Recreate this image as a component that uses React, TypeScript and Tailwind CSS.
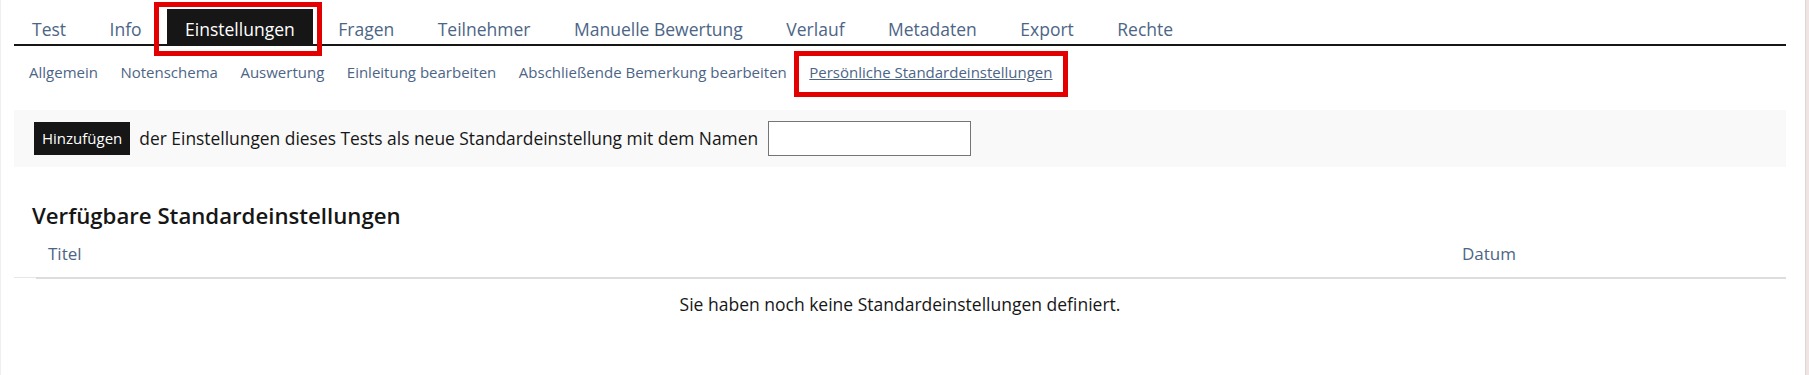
import React from 'react';

const TABS = ['Test', 'Info', 'Einstellungen', 'Fragen', 'Teilnehmer', 'Manuelle Bewertung', 'Verlauf', 'Metadaten', 'Export', 'Rechte'];
const SUBTABS = ['Allgemein', 'Notenschema', 'Auswertung', 'Einleitung bearbeiten', 'Abschließende Bemerkung bearbeiten', 'Persönliche Standardeinstellungen'];

/* red annotation frame drawn over the highlighted element */
function Marker({ className }: { className: string }) {
  return <span className={`pointer-events-none absolute z-10 border-[5px] border-[#e20000] ${className}`} />;
}

export default function App() {
  return (
    <div className="flex h-[375px] w-full overflow-hidden bg-white font-['Open_Sans',sans-serif] text-[#161616]">
      <div className="flex-1 border-l border-[#efefef] pl-[13px] pr-[19px] pt-[9px]">

        {/* ── Main tabs ── */}
        <div className="flex gap-[7.5px] border-b-2 border-[#161616]">
          {TABS.map((t) => {
            const active = t === 'Einstellungen';
            return (
              <div
                key={t}
                className={`relative px-[18px] pt-[10px] pb-[4px] text-[17.5px] leading-[21px] ${
                  active ? 'bg-[#161616] text-white' : 'text-[#4c6586]'
                }`}
              >
                {t}
                {active && <Marker className="-left-[13px] -right-[9px] -top-[7px] -bottom-[12px]" />}
              </div>
            );
          })}
        </div>

        {/* ── Sub tabs ── */}
        <div className="flex gap-[22.5px] pl-[15px] pt-[16px] text-[15px] leading-[20px] text-[#4c6586]">
          {SUBTABS.map((s) => {
            const active = s === 'Persönliche Standardeinstellungen';
            return (
              <span key={s} className={`relative ${active ? 'underline' : ''}`}>
                {s}
                {active && <Marker className="-left-[15px] -right-[15px] -top-[11px] -bottom-[15px]" />}
              </span>
            );
          })}
        </div>

        {/* ── Add panel ── */}
        <div className="mt-[28px] flex items-center bg-[#f9f9f9] px-5 py-[11px]">
          <button className="h-[33px] bg-[#161616] px-[8px] text-[15px] text-white">Hinzufügen</button>
          <span className="ml-[9px] text-[17.4px]">der Einstellungen dieses Tests als neue Standardeinstellung mit dem Namen</span>
          <input type="text" className="ml-[10px] h-[35px] w-[203px] border border-[#757575] bg-white" />
        </div>

        {/* ── Available defaults ── */}
        <h2 className="mt-[34px] pl-[18px] text-[22.2px] font-semibold leading-[30px]">Verfügbare Standardeinstellungen</h2>

        <div className="mt-[11px] flex">
          <div className="mb-[1px] w-[22px] border-b border-[#e6e6e6]" />
          <div className="grid flex-1 grid-cols-[1fr_336px] border-b-2 border-[#dddddd] pb-[11px] text-[17px] leading-[24px] text-[#4c6586]">
            <span className="px-3">Titel</span>
            <span className="px-3">Datum</span>
          </div>
        </div>

        <p className="pt-[13px] text-center text-[17.5px] leading-[24px]">Sie haben noch keine Standardeinstellungen definiert.</p>
      </div>

      {/* scrollbar edge */}
      <div className="w-[4px] border-l border-[#d8d8d8] bg-[#f1e4e4]" />
    </div>
  );
}
